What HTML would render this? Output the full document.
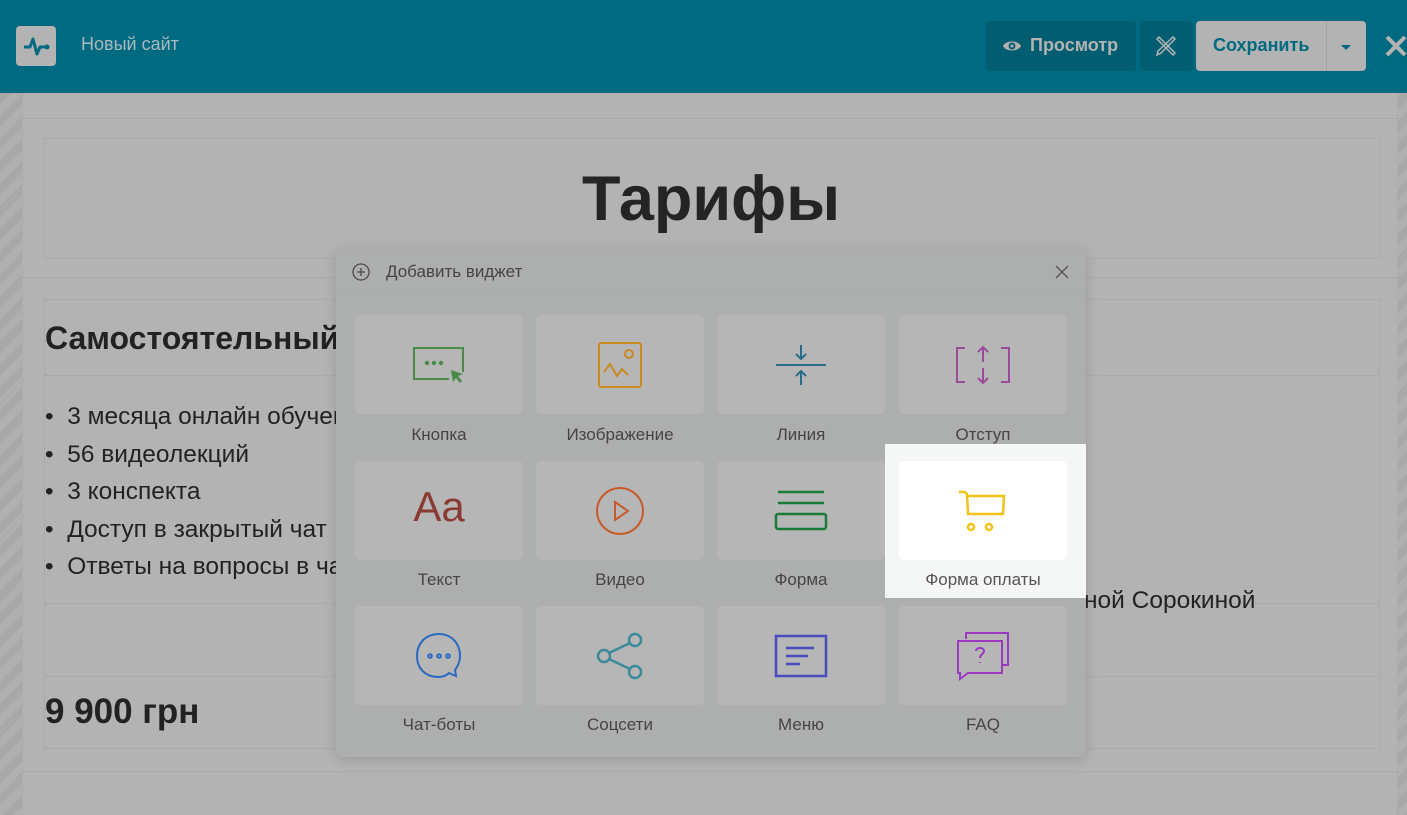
<!DOCTYPE html>
<html><head><meta charset="utf-8">
<style>
*{box-sizing:border-box;margin:0;padding:0}
body{width:1407px;height:815px;overflow:hidden;background:#a9a9a9;font-family:"Liberation Sans",sans-serif;position:relative}
.stripes{position:absolute;left:0;top:93px;width:1407px;height:722px;background:repeating-linear-gradient(135deg,#a8a8a8 0 8px,#b0b0b0 8px 16px)}
.page{position:absolute;left:22px;top:93px;width:1376px;height:722px;background:#b3b3b3;border-left:1px dotted #9aa;border-right:1px dotted #9aa}
.hdr{position:absolute;left:0;top:0;width:1407px;height:93px;background:#006a80}
.abs{position:absolute}
.dot{border:1px dotted #9aa6a6}
.txt{color:#222;font-family:"Liberation Sans",sans-serif}
.modal{position:absolute;left:336px;top:249px;width:750px;height:508px;background:#adafae;border-radius:6px;box-shadow:0 2px 12px rgba(0,0,0,.15)}
.tile{position:absolute;width:168px;height:99px;background:#b6b6b6;border-radius:5px}
.lbl{position:absolute;width:168px;text-align:center;font-size:17px;color:#444;font-family:"Liberation Sans",sans-serif}
.tile svg{position:absolute;left:50%;top:50%;transform:translate(-50%,-50%)}
</style></head><body>
<div class="stripes"></div>
<div class="page">
  <div class="abs" style="left:0;top:25px;width:1376px;border-top:1px dotted #9aa6a6"></div>
  <div class="abs dot" style="left:21px;top:45px;width:1336px;height:121px"></div>
  <div class="abs txt" style="left:0;top:70px;width:1376px;text-align:center;font-size:63px;font-weight:bold;color:#242424">Тарифы</div>
  <div class="abs" style="left:0;top:184px;width:1376px;border-top:1px dotted #9aa6a6"></div>
  <div class="abs dot" style="left:21px;top:206px;width:1336px;height:450px"></div>
  <div class="abs" style="left:21px;top:282px;width:1336px;border-top:1px dotted #9aa6a6"></div>
  <div class="abs" style="left:21px;top:510px;width:1336px;border-top:1px dotted #9aa6a6"></div>
  <div class="abs" style="left:21px;top:583px;width:1336px;border-top:1px dotted #9aa6a6"></div>
  <div class="abs" style="left:0;top:678px;width:1376px;border-top:1px dotted #9aa6a6"></div>
  <div class="abs txt" style="left:22px;top:227px;font-size:32px;font-weight:bold">Самостоятельный</div>
  <div class="abs txt" style="left:22px;top:305px;font-size:24.5px;line-height:37.5px">
    <div>•&nbsp; 3 месяца онлайн обучения</div>
    <div>•&nbsp; 56 видеолекций</div>
    <div>•&nbsp; 3 конспекта</div>
    <div>•&nbsp; Доступ в закрытый чат</div>
    <div>•&nbsp; Ответы на вопросы в чате</div>
  </div>
  <div class="abs txt" style="left:1061px;top:494px;font-size:24.5px">ной Сорокиной</div>
  <div class="abs txt" style="left:22px;top:599px;font-size:35px;font-weight:bold">9 900 грн</div>
</div>
<div class="hdr">
  <div class="abs" style="left:16px;top:26px;width:40px;height:40px;background:#b3b3b3;border-radius:4px">
    <svg width="40" height="40" viewBox="0 0 40 40"><path d="M8 21h6l3-8 4 15 3-7h7" fill="none" stroke="#006a80" stroke-width="3" stroke-linejoin="round"/><circle cx="31" cy="21" r="2.5" fill="#006a80"/></svg>
  </div>
  <div class="abs" style="left:81px;top:34px;font-size:18px;color:#a9b9bd">Новый сайт</div>
  <div class="abs" style="left:986px;top:21px;width:150px;height:50px;background:#005e70;border-radius:4px;color:#b3b3b3;font-weight:bold;font-size:18px;line-height:48px;padding-left:44px">Просмотр
    <svg class="abs" style="left:16px;top:16px" width="20" height="18" viewBox="0 0 20 18"><path d="M1 9C4 3 16 3 19 9 16 15 4 15 1 9z" fill="#b3b3b3"/><circle cx="10" cy="9" r="3.5" fill="#005e70"/><circle cx="10" cy="9" r="1.5" fill="#b3b3b3"/></svg>
  </div>
  <div class="abs" style="left:1140px;top:21px;width:53px;height:50px;background:#005e70;border-radius:4px">
    <svg class="abs" style="left:15px;top:14px" width="22" height="22" viewBox="0 0 22 22" fill="none" stroke="#b3b3b3" stroke-width="1.5"><path d="M4 2l16 16-2 2L2 4z"/><path d="M18 2l2 2L6 18l-4 2 1-4z"/></svg>
  </div>
  <div class="abs" style="left:1196px;top:21px;width:170px;height:50px;background:#b3b3b3;border-radius:4px">
    <div class="abs" style="left:17px;top:14px;font-size:18px;font-weight:bold;color:#006a80">Сохранить</div>
    <div class="abs" style="left:130px;top:0;width:1px;height:50px;background:#a3a3a3"></div>
    <div class="abs" style="left:145px;top:24px;width:0;height:0;border-left:5px solid transparent;border-right:5px solid transparent;border-top:5px solid #006a80"></div>
  </div>
  <svg class="abs" style="left:1384px;top:34px" width="24" height="24" viewBox="0 0 24 24"><path d="M3 3l18 18M21 3L3 21" stroke="#b3b3b3" stroke-width="4"/></svg>
</div>
<div class="modal">
  <svg class="abs" style="left:16px;top:14px" width="18" height="18" viewBox="0 0 18 18" fill="none" stroke="#4a4a4a" stroke-width="1.3"><circle cx="9" cy="9" r="8"/><path d="M9 5v8M5 9h8"/></svg>
  <div class="abs" style="left:50px;top:13px;font-size:17px;color:#444">Добавить виджет</div>
  <svg class="abs" style="left:719px;top:16px" width="14" height="14" viewBox="0 0 14 14"><path d="M1 1l12 12M13 1L1 13" stroke="#555" stroke-width="1.4"/></svg>
  <div class="abs" style="left:0;top:45px;width:750px;border-top:1px solid #9fb0ac"></div>
  <div class="abs" style="left:549px;top:195px;width:201px;height:154px;background:#f5f7f6"></div>
  <div class="tile" style="left:19px;top:66px"><svg width="56" height="40" viewBox="0 0 56 40" fill="none" stroke="#4a8a48" stroke-width="2"><path d="M38 34H3V3h49v24"/><circle cx="16" cy="18" r="1.2" fill="#4a8a48"/><circle cx="23" cy="18" r="1.2" fill="#4a8a48"/><circle cx="30" cy="18" r="1.2" fill="#4a8a48"/><path d="M40 25l12 4-5 2 4 5-2 2-4-5-3 4z" fill="#4a8a48" stroke="none"/></svg></div>
  <div class="tile" style="left:200px;top:66px"><svg width="46" height="46" viewBox="0 0 46 46" fill="none" stroke="#c98a20" stroke-width="2"><rect x="2" y="1" width="42" height="44" rx="2"/><circle cx="32" cy="12" r="4"/><path d="M7 30l6-8 7 12 5-7 6 6"/></svg></div>
  <div class="tile" style="left:381px;top:66px"><svg width="54" height="44" viewBox="0 0 54 44" fill="none" stroke="#2a6a8a" stroke-width="2"><path d="M2 22h50"/><path d="M27 2v14M22 11l5 5 5-5M27 42V28M22 33l5-5 5 5"/></svg></div>
  <div class="tile" style="left:563px;top:66px"><svg width="56" height="40" viewBox="0 0 56 40" fill="none" stroke="#9a4a9a" stroke-width="2"><path d="M10 3H2v34h8M46 3h8v34h-8"/><path d="M28 2v15M23 7l5-5 5 5M28 38V23M23 33l5 5 5-5"/></svg></div>
  <div class="lbl" style="left:19px;top:176px">Кнопка</div>
  <div class="lbl" style="left:200px;top:176px">Изображение</div>
  <div class="lbl" style="left:381px;top:176px">Линия</div>
  <div class="lbl" style="left:563px;top:176px">Отступ</div>
  <div class="tile" style="left:19px;top:212px"><div class="abs" style="left:0;top:22px;width:168px;text-align:center;font-size:42px;color:#8a3a30;font-family:'Liberation Sans Narrow','Liberation Sans',sans-serif">Aa</div></div>
  <div class="tile" style="left:200px;top:212px"><svg width="50" height="50" viewBox="0 0 50 50" fill="none" stroke="#c85a2a" stroke-width="2"><circle cx="25" cy="25" r="23"/><path d="M20 16v18l13-9z"/></svg></div>
  <div class="tile" style="left:381px;top:212px"><svg width="54" height="42" viewBox="0 0 54 42" fill="none" stroke="#1a7a3a" stroke-width="2.5"><path d="M4 2h46M4 13h46"/><rect x="2" y="24" width="50" height="15" rx="2"/></svg></div>
  <div class="tile" style="left:563px;top:212px;background:#fff"><svg width="52" height="44" viewBox="0 0 52 44" fill="none" stroke="#f0c419" stroke-width="2.5"><path d="M2 3h6l2 2 1 20h35l1-18H11"/><circle cx="14" cy="38" r="3"/><circle cx="32" cy="38" r="3"/></svg></div>
  <div class="lbl" style="left:19px;top:321px">Текст</div>
  <div class="lbl" style="left:200px;top:321px">Видео</div>
  <div class="lbl" style="left:381px;top:321px">Форма</div>
  <div class="lbl" style="left:563px;top:321px;color:#555">Форма оплаты</div>
  <div class="tile" style="left:19px;top:357px"><svg width="50" height="50" viewBox="0 0 50 50" fill="none" stroke="#2a6ac0" stroke-width="2"><path d="M25 3C12 3 3 12 3 25s9 21 21 21c5 0 9-2 11-4l7 3-1-6c3-4 5-9 5-14C46 12 37 3 25 3z"/><circle cx="16" cy="25" r="1.8"/><circle cx="25" cy="25" r="1.8"/><circle cx="34" cy="25" r="1.8"/></svg></div>
  <div class="tile" style="left:200px;top:357px"><svg width="54" height="50" viewBox="0 0 54 50" fill="none" stroke="#3a8a9a" stroke-width="2.5"><circle cx="42" cy="9" r="6"/><circle cx="42" cy="41" r="6"/><circle cx="11" cy="25" r="6"/><path d="M16 22l21-10M16 28l21 10"/></svg></div>
  <div class="tile" style="left:381px;top:357px"><svg width="54" height="44" viewBox="0 0 54 44" fill="none" stroke="#4a4ac0" stroke-width="2.5"><rect x="2" y="2" width="50" height="40"/><path d="M12 14h28M12 22h22M12 30h14"/></svg></div>
  <div class="tile" style="left:563px;top:357px"><svg width="54" height="50" viewBox="0 0 54 50" fill="none" stroke="#9a3ac0" stroke-width="2"><path d="M10 8V2h42v32h-6"/><path d="M2 10h44v32H12l-8 6v-6H2z"/><path d="M20 20c0-4 8-4 8 0 0 3-4 3-4 7M24 31v1"/></svg></div>
  <div class="lbl" style="left:19px;top:466px">Чат-боты</div>
  <div class="lbl" style="left:200px;top:466px">Соцсети</div>
  <div class="lbl" style="left:381px;top:466px">Меню</div>
  <div class="lbl" style="left:563px;top:466px">FAQ</div>
</div>
</body></html>
